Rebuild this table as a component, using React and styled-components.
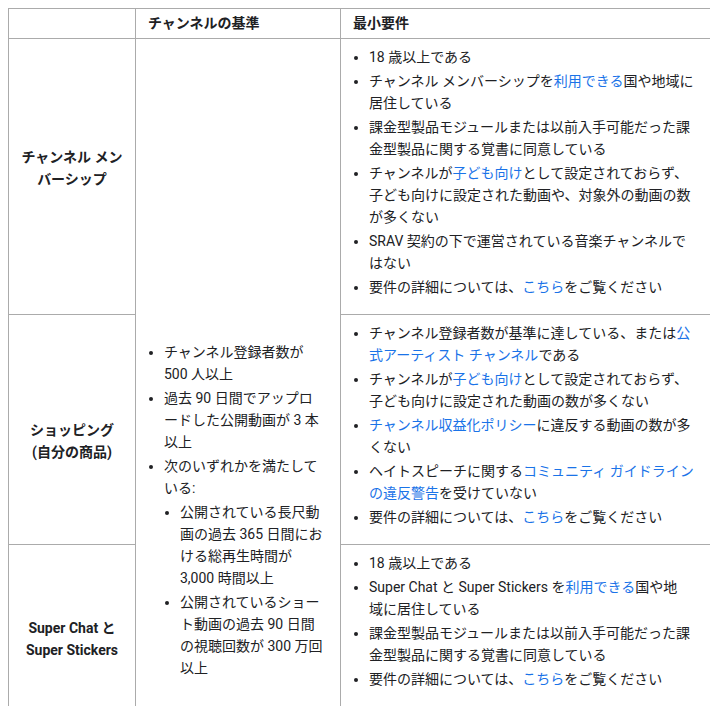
import React from "react";
import styled, { createGlobalStyle } from "styled-components";

const GlobalStyle = createGlobalStyle`
  body {
    margin: 8px;
    background: #ffffff;
    font-family: Roboto, "Noto Sans CJK JP", sans-serif;
    font-size: 14px;
    line-height: 22px;
    color: #202124;
  }
`;

const Table = styled.table`
  width: 702px;
  border-collapse: collapse;
  table-layout: fixed;
`;

const Col = styled.col`
  width: ${(p) => p.$w}px;
`;

const HeadCell = styled.th`
  border: 1px solid #ababab;
  padding: 3px 12px 4px;
  text-align: left;
  font-weight: 700;
  vertical-align: middle;
`;

const RowHead = styled.th`
  border: 1px solid #ababab;
  padding: ${(p) => 8 + Math.max(0, 2 * p.$shift)}px 10px
    ${(p) => 8 + Math.max(0, -2 * p.$shift)}px;
  text-align: center;
  font-weight: 700;
  vertical-align: middle;
`;

const Cell = styled.td`
  border: 1px solid #ababab;
  padding: 7px 12px 16px;
  vertical-align: top;
`;

const EmptyCell = styled.td`
  border: 1px solid #ababab;
  border-bottom-style: hidden;
  padding: 0;
`;

const MidCell = styled.td`
  border: 1px solid #ababab;
  padding: 10px 14px 10px 12px;
  vertical-align: middle;
`;

const List = styled.ul`
  margin: ${(p) => (p.$nested ? "2px 0 0" : "0")};
  padding-left: 16px;
  list-style: disc;
`;

const Item = styled.li`
  & + & {
    margin-top: 2px;
  }
`;

const Link = styled.a`
  color: #1a73e8;
  text-decoration: none;
`;

const DetailsItem = () => (
  <Item>
    要件の詳細については、<Link href="#">こちら</Link>をご覧ください
  </Item>
);

const AgreementItem = () => (
  <Item>課金型製品モジュールまたは以前入手可能だった課金型製品に関する覚書に同意している</Item>
);

export default function App() {
  return (
    <>
      <GlobalStyle />
      <Table>
        <colgroup>
          <Col $w={127} />
          <Col $w={205} />
          <Col $w={370} />
        </colgroup>
        <thead>
          <tr>
            <HeadCell />
            <HeadCell>チャンネルの基準</HeadCell>
            <HeadCell>最小要件</HeadCell>
          </tr>
        </thead>
        <tbody>
          <tr>
            <RowHead $shift={-9}>チャンネル メンバーシップ</RowHead>
            <EmptyCell />
            <Cell>
              <List>
                <Item>18 歳以上である</Item>
                <Item>
                  チャンネル メンバーシップを<Link href="#">利用できる</Link>国や地域に居住している
                </Item>
                <AgreementItem />
                <Item>
                  チャンネルが<Link href="#">子ども向け</Link>
                  として設定されておらず、子ども向けに設定された動画や、対象外の動画の数が多くない
                </Item>
                <Item>SRAV 契約の下で運営されている音楽チャンネルではない</Item>
                <DetailsItem />
              </List>
            </Cell>
          </tr>
          <tr>
            <RowHead $shift={11}>
              ショッピング
              <br />
              (自分の商品)
            </RowHead>
            <MidCell rowSpan={2}>
              <List>
                <Item>チャンネル登録者数が 500 人以上</Item>
                <Item>過去 90 日間でアップロードした公開動画が 3 本以上</Item>
                <Item>
                  次のいずれかを満たしている:
                  <List $nested>
                    <Item>公開されている長尺動画の過去 365 日間における総再生時間が 3,000 時間以上</Item>
                    <Item>公開されているショート動画の過去 90 日間の視聴回数が 300 万回以上</Item>
                  </List>
                </Item>
              </List>
            </MidCell>
            <Cell>
              <List>
                <Item>
                  チャンネル登録者数が基準に達している、または
                  <Link href="#">公式アーティスト チャンネル</Link>である
                </Item>
                <Item>
                  チャンネルが<Link href="#">子ども向け</Link>
                  として設定されておらず、子ども向けに設定された動画の数が多くない
                </Item>
                <Item>
                  <Link href="#">チャンネル収益化ポリシー</Link>に違反する動画の数が多くない
                </Item>
                <Item>
                  ヘイトスピーチに関する
                  <Link href="#">コミュニティ ガイドラインの違反警告</Link>を受けていない
                </Item>
                <DetailsItem />
              </List>
            </Cell>
          </tr>
          <tr>
            <RowHead $shift={13}>Super Chat と Super Stickers</RowHead>
            <Cell>
              <List>
                <Item>18 歳以上である</Item>
                <Item>
                  Super Chat と Super Stickers を<Link href="#">利用できる</Link>国や地
                  <br />
                  域に居住している
                </Item>
                <AgreementItem />
                <DetailsItem />
              </List>
            </Cell>
          </tr>
        </tbody>
      </Table>
    </>
  );
}
